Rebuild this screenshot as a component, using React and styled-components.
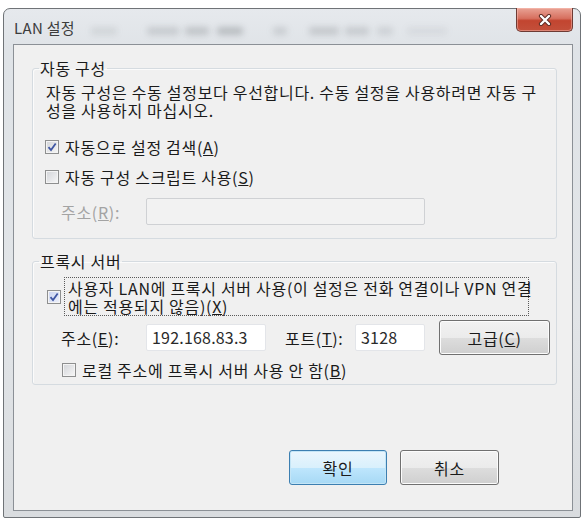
import React from 'react';
import styled, { createGlobalStyle } from 'styled-components';

const GlobalStyle = createGlobalStyle`
  html, body {
    margin: 0;
    padding: 0;
    background: #ffffff;
  }
  body {
    font-family: "Noto Sans CJK KR", "Noto Sans", sans-serif;
    color: #1a1a1a;
  }
`;

const Window = styled.div`
  box-sizing: border-box;
  width: 578px;
  height: 510px;
  margin: 8px 0 0 3px;
  padding: 0 7px 6px 9px;
  border: 1px solid #6f7377;
  border-radius: 7px 7px 2px 2px;
  background: linear-gradient(180deg, #e6e9ed 0%, #dfe3e7 8%, #e2e5e8 60%, #d9dcdf 100%);
  display: flex;
  flex-direction: column;
`;

const TitleBar = styled.div`
  height: 35px;
  display: flex;
  align-items: flex-start;
`;

const Title = styled.span`
  margin: 8px 0 0 1px;
  font-size: 15px;
  letter-spacing: 0.3px;
  color: #3c3c3c;
  white-space: nowrap;
`;

const Blur = styled.span`
  display: block;
  width: ${(p) => p.w}px;
  height: 8px;
  margin: 18px 0 0 ${(p) => p.gap}px;
  background: rgba(90, 95, 100, ${(p) => p.o});
  filter: blur(3px);
  border-radius: 3px;
`;

const CloseButton = styled.div`
  box-sizing: border-box;
  width: 57px;
  height: 24px;
  margin: -1px 0 0 auto;
  border: 1px solid #6e3b34;
  border-top: none;
  border-radius: 0 0 5px 5px;
  background: linear-gradient(180deg, #e9a395 0%, #d7705f 45%, #c24530 55%, #c3503b 100%);
  display: flex;
  align-items: center;
  justify-content: center;
  box-shadow: inset 0 0 0 1px rgba(255, 200, 190, 0.45);
`;

const Client = styled.div`
  box-sizing: border-box;
  flex: 1;
  border: 1px solid #8b9096;
  background: #f0f0f0;
  display: flex;
  flex-direction: column;
`;

const Group = styled.fieldset`
  margin: ${(p) => p.top}px 15px 0 18px;
  padding: 0;
  border: 1px solid #d5dbe0;
  border-radius: 3px;
  box-shadow: inset 1px 1px 0 #fbfbfb;
  min-inline-size: 0;
`;

const Legend = styled.legend`
  margin-left: 6px;
  padding: 0 1px;
  font-size: 16px;
  line-height: 18px;
  letter-spacing: 0.7px;
`;

const GroupBody = styled.div`
  display: flex;
  flex-direction: column;
  padding: ${(p) => p.pad};
`;

const Note = styled.p`
  margin: 0 0 0 1px;
  font-size: 16px;
  line-height: 18px;
  letter-spacing: 0.7px;
  white-space: nowrap;
`;

const CheckRow = styled.label`
  display: flex;
  align-items: center;
  gap: ${(p) => p.gap || 6}px;
  margin: ${(p) => p.m};
  font-size: 16px;
  line-height: 18px;
  letter-spacing: 0.7px;
  white-space: nowrap;
`;

const Box = styled.span`
  box-sizing: border-box;
  flex: none;
  width: 14px;
  height: 14px;
  border: 1px solid #8e8f8f;
  background: ${(p) => (p.hot ? 'linear-gradient(135deg, #c9d3f0, #eef1fb)' : 'linear-gradient(135deg, #d2d4d8, #f7f7f7)')};
  box-shadow: inset 0 0 0 1px #f4f4f4;
  display: flex;
  align-items: center;
  justify-content: center;
`;

const Focus = styled.span`
  display: block;
  box-sizing: border-box;
  width: 465px;
  padding: 1px 2px 0 3px;
  border: 1px dotted #5a5a5a;
  line-height: 18px;
`;

const FieldRow = styled.div`
  display: flex;
  align-items: center;
  margin: ${(p) => p.m};
  padding-left: ${(p) => p.indent}px;
`;

const FieldLabel = styled.span`
  width: ${(p) => p.w}px;
  flex: none;
  margin-left: ${(p) => p.ml || 0}px;
  font-size: 16px;
  letter-spacing: 0.7px;
  white-space: nowrap;
  color: ${(p) => (p.disabled ? '#a3a3a3' : '#1a1a1a')};
`;

const Input = styled.div`
  box-sizing: border-box;
  width: ${(p) => p.w}px;
  height: 27px;
  flex: none;
  padding: 2px 5px 0;
  border: 1px solid ${(p) => (p.disabled ? '#cfd1d4' : '#e3e5e9')};
  border-radius: 2px;
  background: ${(p) => (p.disabled ? '#f2f2f2' : '#ffffff')};
  font-size: 16px;
  letter-spacing: 0.2px;
  color: #2a2a2a;
  line-height: 21px;
`;

const Button = styled.div`
  box-sizing: border-box;
  width: ${(p) => p.w}px;
  height: 35px;
  flex: none;
  margin-left: ${(p) => p.ml || 0}px;
  display: flex;
  align-items: center;
  justify-content: center;
  border: 1px solid ${(p) => (p.primary ? '#3c7fb1' : '#707070')};
  border-radius: 3px;
  background: ${(p) =>
    p.primary
      ? 'linear-gradient(180deg, #eaf6fd 0%, #d9f0fc 50%, #bee6fd 51%, #a7d9f5 100%)'
      : 'linear-gradient(180deg, #f2f2f2 0%, #ebebeb 50%, #dddddd 51%, #cfcfcf 100%)'};
  box-shadow: inset 0 0 0 1px ${(p) => (p.primary ? '#c4e5f6' : '#fcfcfc')};
  font-size: 16px;
  letter-spacing: 0.7px;
  color: #1a1a1a;
`;

const Footer = styled.div`
  margin-top: auto;
  margin-bottom: 25px;
  padding-right: 73px;
  display: flex;
  justify-content: flex-end;
  gap: 13px;
`;

const Check = () => (
  <svg width="10" height="10" viewBox="0 0 10 10">
    <path d="M1.5 5.2 L4 8 L8.7 1.5" fill="none" stroke="#3f56a3" strokeWidth="1.8" />
  </svg>
);

const CheckBox = ({ checked, hot }) => <Box hot={hot}>{checked && <Check />}</Box>;

const blurs = [
  { w: 26, gap: 16, o: 0.12 },
  { w: 32, gap: 30, o: 0.2 },
  { w: 24, gap: 6, o: 0.25 },
  { w: 26, gap: 8, o: 0.3 },
  { w: 14, gap: 30, o: 0.18 },
  { w: 30, gap: 22, o: 0.22 },
  { w: 24, gap: 6, o: 0.2 },
  { w: 16, gap: 8, o: 0.15 },
  { w: 40, gap: 14, o: 0.08 },
];

const App = () => (
  <>
    <GlobalStyle />
    <Window>
      <TitleBar>
        <Title>LAN 설정</Title>
        {blurs.map((b, i) => (
          <Blur key={i} w={b.w} gap={b.gap} o={b.o} />
        ))}
        <CloseButton>
          <svg width="14" height="12" viewBox="0 0 14 12">
            <path d="M3 2 L11 10 M11 2 L3 10" stroke="#5b2a22" strokeWidth="4.2" strokeLinecap="round" />
            <path d="M3 2 L11 10 M11 2 L3 10" stroke="#ffffff" strokeWidth="2.4" strokeLinecap="round" />
          </svg>
        </CloseButton>
      </TitleBar>
      <Client>
        <Group top={14}>
          <Legend>자동 구성</Legend>
          <GroupBody pad="6px 12px 13px 12px">
            <Note>
              자동 구성은 수동 설정보다 우선합니다. 수동 설정을 사용하려면 자동 구
              <br />
              성을 사용하지 마십시오.
            </Note>
            <CheckRow m="19px 0 0 0">
              <CheckBox checked />
              <span>
                자동으로 설정 검색(<u>A</u>)
              </span>
            </CheckRow>
            <CheckRow m="12px 0 0 0">
              <CheckBox />
              <span>
                자동 구성 스크립트 사용(<u>S</u>)
              </span>
            </CheckRow>
            <FieldRow m="12px 0 0 0" indent={16}>
              <FieldLabel w={85} disabled>
                주소(<u>R</u>):
              </FieldLabel>
              <Input w={279} disabled />
            </FieldRow>
          </GroupBody>
        </Group>

        <Group top={13}>
          <Legend>프록시 서버</Legend>
          <GroupBody pad="7px 12px 5px 14px">
            <CheckRow m="0" gap={3}>
              <CheckBox checked hot />
              <Focus>
                사용자 LAN에 프록시 서버 사용(이 설정은 전화 연결이나 VPN 연결
                <br />
                에는 적용되지 않음)(<u>X</u>)
              </Focus>
            </CheckRow>
            <FieldRow m="4px 0 0 0" indent={14}>
              <FieldLabel w={85}>
                주소(<u>E</u>):
              </FieldLabel>
              <Input w={120}>192.168.83.3</Input>
              <FieldLabel w={70} ml={19}>
                포트(<u>T</u>):
              </FieldLabel>
              <Input w={70}>3128</Input>
              <Button w={111} ml={14}>
                고급(<u>C</u>)
              </Button>
            </FieldRow>
            <CheckRow m="6px 0 0 15px">
              <CheckBox />
              <span>
                로컬 주소에 프록시 서버 사용 안 함(<u>B</u>)
              </span>
            </CheckRow>
          </GroupBody>
        </Group>

        <Footer>
          <Button w={98} primary>
            확인
          </Button>
          <Button w={99}>취소</Button>
        </Footer>
      </Client>
    </Window>
  </>
);

export default App;
